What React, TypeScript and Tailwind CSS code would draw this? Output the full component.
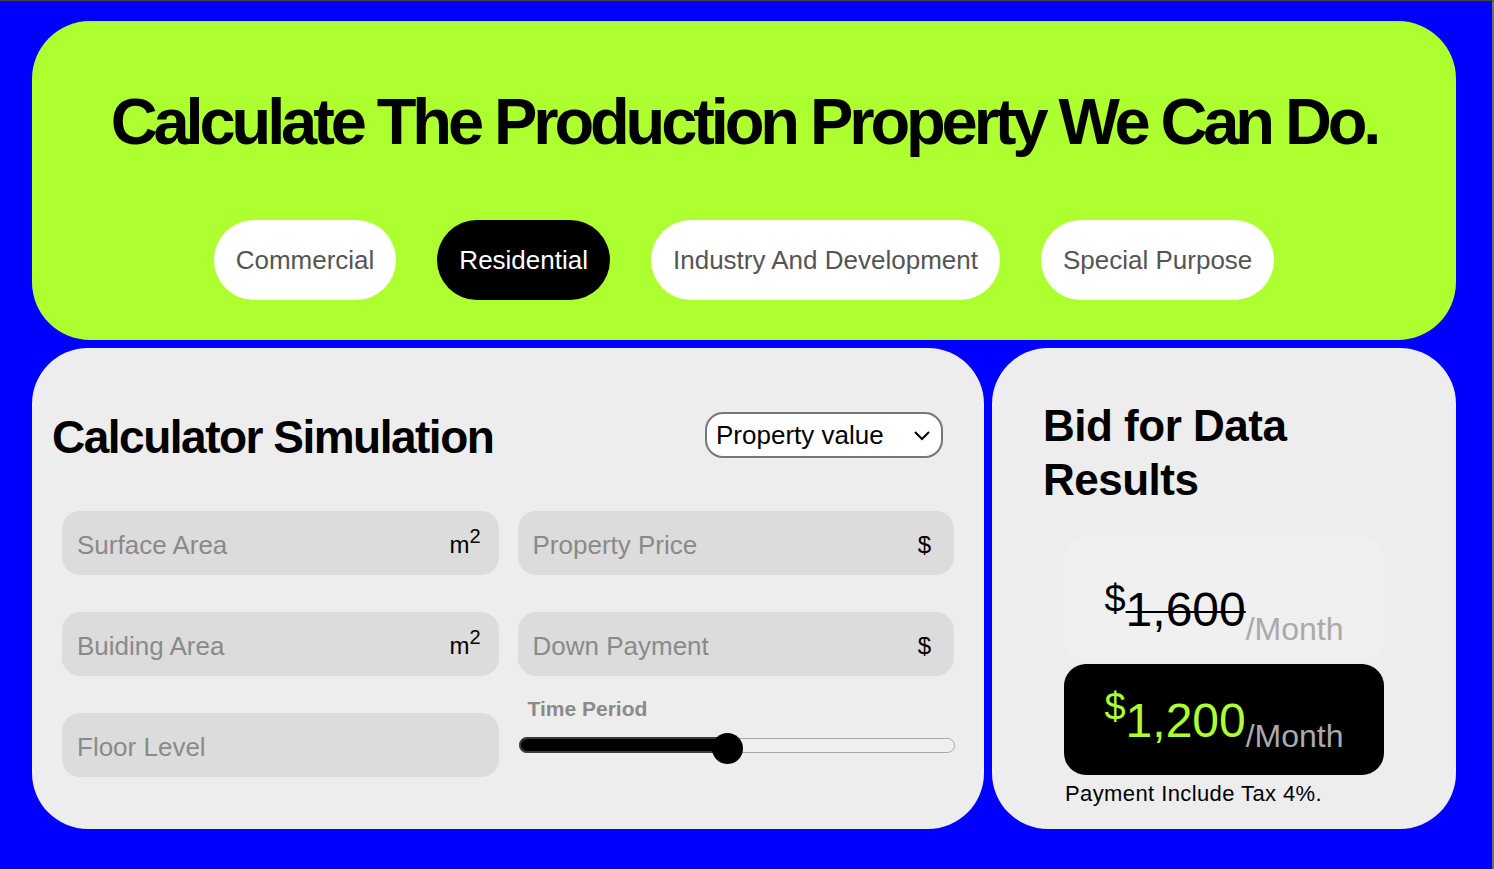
import React from "react";

function Tab({ label, active }: { label: string; active?: boolean }) {
  return (
    <div
      className={
        "h-[80px] px-[22px] rounded-full flex items-center text-[26px] leading-none " +
        (active ? "bg-black text-white" : "bg-white text-[#555555]")
      }
    >
      {label}
    </div>
  );
}

function Field({ placeholder, unit }: { placeholder: string; unit?: "m2" | "$" }) {
  return (
    <div className="h-[64px] rounded-[18px] bg-[#dcdcdc] flex items-center pl-[15px] pt-[4px]">
      <input
        placeholder={placeholder}
        className="flex-1 min-w-0 bg-transparent outline-none text-[26px] text-black placeholder:text-[#8a8a8a]"
      />
      {unit === "m2" && (
        <span className="pr-[18px] text-[24px] text-black leading-none">
          m<sup className="text-[20px]">2</sup>
        </span>
      )}
      {unit === "$" && <span className="pr-[23px] text-[24px] text-black leading-none">$</span>}
    </div>
  );
}

export default function App() {
  return (
    <div
      className="h-[869px] w-full bg-[#0000ff] border-t border-t-[#444444] border-r-2 border-r-[#6e6e6e] pl-[32px] pr-[36px] pt-[20px] overflow-hidden"
      style={{ fontFamily: "'Liberation Sans', Arial, sans-serif" }}
    >
      <div className="h-[319px] rounded-[58px] bg-[#adff2f] flex flex-col items-center pt-[68px]">
        <h1 className="text-[65px] leading-[65px] font-bold text-black tracking-[-4.1px] whitespace-nowrap">
          Calculate The Production Property We Can Do.
        </h1>
        <div className="mt-[66px] flex gap-[41px]">
          <Tab label="Commercial" />
          <Tab label="Residential" active />
          <Tab label="Industry And Development" />
          <Tab label="Special Purpose" />
        </div>
      </div>

      <div className="mt-[8px] grid grid-cols-[952px_464px] gap-[8px] h-[481px]">
        <div className="rounded-[56px] bg-[#ededed] pt-[64px]">
          <div className="flex items-center justify-between pl-[20px] pr-[41px] h-[46px]">
            <h2 className="text-[46px] leading-none font-bold text-black tracking-[-1.5px] pt-[3px]">
              Calculator Simulation
            </h2>
            <div className="w-[238px] h-[46px] rounded-[18px] border-2 border-[#767676] bg-white flex items-center justify-between pl-[9px] pr-[10px]">
              <span className="text-[26px] text-black leading-none">Property value</span>
              <svg width="18" height="12" viewBox="0 0 18 12" fill="none">
                <path d="M2 3 L9 10 L16 3" stroke="black" strokeWidth="2" />
              </svg>
            </div>
          </div>

          <div className="mt-[53px] px-[30px] grid grid-cols-2 gap-x-[19px] gap-y-[37px]">
            <Field placeholder="Surface Area" unit="m2" />
            <Field placeholder="Property Price" unit="$" />
            <Field placeholder="Buiding Area" unit="m2" />
            <Field placeholder="Down Payment" unit="$" />
            <Field placeholder="Floor Level" />
            <div className="-mt-[15px] h-[79px] flex flex-col">
              <div className="pl-[10px] text-[21px] leading-none font-bold text-[#8a8a8a]">Time Period</div>
              <div className="relative mt-[14px] ml-[1px] h-[31px] w-[436px]">
                <div className="absolute left-0 right-0 top-[5px] h-[15px] rounded-full border border-[#a8a8a8] bg-[#efefef]" />
                <div className="absolute left-0 top-[4px] h-[16px] w-[210px] rounded-full bg-black border-2 border-[#3c3c3c]" />
                <div className="absolute left-[193px] top-0 h-[31px] w-[31px] rounded-full bg-black" />
              </div>
            </div>
          </div>
        </div>

        <div className="rounded-[56px] bg-[#ededed] pt-[51px] flex flex-col">
          <h2 className="pl-[51px] text-[44px] leading-[54px] font-bold text-black tracking-[-0.5px]">
            Bid for Data
            <br />
            Results
          </h2>
          <div className="mt-[30px] self-center w-[320px] h-[123px] rounded-[22px] bg-[#f0f0f0] flex justify-center items-start">
            <span className="mt-[43px] text-[38px] leading-none text-black">$</span>
            <span className="mt-[49px] text-[48px] leading-none text-black line-through decoration-2">1,600</span>
            <span className="mt-[76px] text-[32px] leading-none text-[#aaaaaa]">/Month</span>
          </div>
          <div className="mt-[4px] self-center w-[320px] h-[111px] rounded-[22px] bg-black flex justify-center items-start">
            <span className="mt-[24px] text-[38px] leading-none text-[#adff2f]">$</span>
            <span className="mt-[33px] text-[48px] leading-none text-[#adff2f]">1,200</span>
            <span className="mt-[56px] text-[32px] leading-none text-[#aaaaaa]">/Month</span>
          </div>
          <div className="mt-[8px] self-center w-[320px] pl-[1px] text-[22px] leading-none text-black tracking-[0.4px]">
            Payment Include Tax 4%.
          </div>
        </div>
      </div>
    </div>
  );
}
